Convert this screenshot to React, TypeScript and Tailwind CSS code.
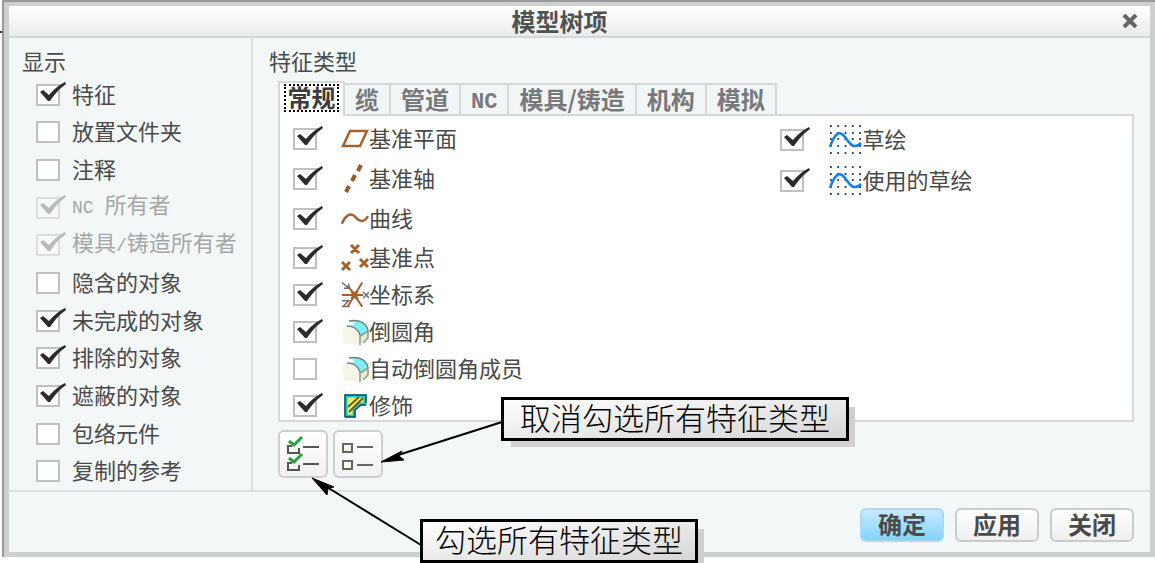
import { useState } from "react";
import type { ReactNode } from "react";

type Item = { label: ReactNode; checked?: boolean; disabled?: boolean; icon?: ReactNode };

const Latin = ({ children }: { children: ReactNode }) => (
  <span className="font-['Liberation_Mono',monospace] text-lg">{children}</span>
);

const PlaneIcon = () => (
  <svg width="28" height="30" viewBox="0 0 28 30" fill="none" stroke="#a5602c" strokeWidth="2.5">
    <path d="M9 7H26L19 22H2Z" />
  </svg>
);

const AxisIcon = () => (
  <svg width="28" height="30" viewBox="0 0 28 30" fill="none" stroke="#9a5a2c" strokeWidth="4">
    <path d="M20 1L17 7M14 11L11 17M8 22L5 28" />
  </svg>
);

const CurveIcon = () => (
  <svg width="28" height="30" viewBox="0 0 29 30" fill="none" stroke="#a5602c" strokeWidth="2.5">
    <path d="M1 20C4 12 10 7 15 13C19 18 24 19 28 12" />
  </svg>
);

const PointIcon = () => (
  <svg width="28" height="30" viewBox="0 0 28 30" fill="none" stroke="#a8602b" strokeWidth="3">
    <path d="M10 2L18 10M18 2L10 10M1 19L9 27M9 19L1 27M19 16L27 24M27 16L19 24" />
  </svg>
);

const CsysIcon = () => (
  <svg width="28" height="30" viewBox="0 0 29 30" fill="none">
    <path d="M1 15H23M7 5L22 27M22 2L7 27" stroke="#a8602b" strokeWidth="2" />
    <path d="M11 11L17 19M17 11L11 19" stroke="#a8602b" strokeWidth="3" />
    <path d="M1 2L8 8M8 3V8H3M1 21H8L2 27H9M23 12L29 18M29 12L23 18" stroke="#6f6f6f" strokeWidth="1.5" />
  </svg>
);

const RoundIcon = () => (
  <svg width="28" height="30" viewBox="0 0 28 30">
    <path d="M1 12L9 9L18 17V27H3Z" fill="#f6f5ea" />
    <path d="M19 17L27 13V21L20 26Z" fill="#e6e8d6" />
    <path d="M9 4C19 2 26 7 27 14L20 19C19 13 16 12 11 9L14 6Z" fill="#7ff0f5" />
    <path d="M8 4C20 2 26 7 27 14M6 9C13 9 17 12 19 18" fill="none" stroke="#6d8486" strokeWidth="1.5" />
    <path d="M19 18V28M19 19L27 14V21L22 26" fill="none" stroke="#8c9a88" strokeWidth="1.5" />
  </svg>
);

const CosmeticIcon = () => (
  <svg width="28" height="30" viewBox="0 0 28 30">
    <path d="M5 5H24V13H19L13 18V25H5Z" fill="#f7ee5c" stroke="#18c9cf" strokeWidth="3" />
    <path d="M7 16L18 6M8 21L22 7" stroke="#6b5d1d" strokeWidth="2" />
    <path d="M4 26V4H26M25 12V5M25 14H20L14 19V26H4" fill="none" stroke="#17494b" strokeWidth="1.5" />
  </svg>
);

const SketchIcon = () => (
  <svg width="35" height="30" viewBox="0 0 35 30" fill="none">
    {[1, 8, 14, 21, 28].map((y) => (
      <path key={y} d={`M2 ${y}H34`} stroke="#2b4a74" strokeWidth="1.8" strokeDasharray="1.8 5.5" />
    ))}
    <path d="M2 22C6 10 11 4 17 12C22 19 26 25 33 18" stroke="#1180ee" strokeWidth="2.5" />
  </svg>
);

const SelectAllIcon = () => (
  <svg width="36" height="36" viewBox="0 0 36 36" fill="none">
    <path d="M7 10H3V17H14V12M7 27H3V34H14V29" stroke="#555" strokeWidth="2" />
    <path d="M18 11H34M18 28H34" stroke="#555" strokeWidth="2" />
    <path d="M4 5L9 9L17 1M4 22L9 26L17 18" stroke="#27a33a" strokeWidth="3" />
  </svg>
);

const SelectNoneIcon = () => (
  <svg width="36" height="36" viewBox="0 0 36 36" fill="none" stroke="#666" strokeWidth="2">
    <path d="M3 8H12V16H3ZM3 25H12V33H3Z" fill="#fffff0" />
    <path d="M17 11H33M17 29H33" />
  </svg>
);

const displayItems: Item[] = [
  { label: "特征", checked: true },
  { label: "放置文件夹" },
  { label: "注释" },
  { label: <><Latin>NC </Latin>所有者</>, checked: true, disabled: true },
  { label: <>模具<Latin>/</Latin>铸造所有者</>, checked: true, disabled: true },
  { label: "隐含的对象" },
  { label: "未完成的对象", checked: true },
  { label: "排除的对象", checked: true },
  { label: "遮蔽的对象", checked: true },
  { label: "包络元件" },
  { label: "复制的参考" },
];

const featureItems: Item[] = [
  { label: "基准平面", checked: true, icon: <PlaneIcon /> },
  { label: "基准轴", checked: true, icon: <AxisIcon /> },
  { label: "曲线", checked: true, icon: <CurveIcon /> },
  { label: "基准点", checked: true, icon: <PointIcon /> },
  { label: "坐标系", checked: true, icon: <CsysIcon /> },
  { label: "倒圆角", checked: true, icon: <RoundIcon /> },
  { label: "自动倒圆角成员", icon: <RoundIcon /> },
  { label: "修饰", checked: true, icon: <CosmeticIcon /> },
];

const sketchItems: Item[] = [
  { label: "草绘", checked: true, icon: <SketchIcon /> },
  { label: "使用的草绘", checked: true, icon: <SketchIcon /> },
];

const tabs = ["缆", "管道", "NC", "模具/铸造", "机构", "模拟"];

function CheckBox({ item }: { item: Item }) {
  return (
    <span className="relative h-[22px] w-6 shrink-0">
      <input
        type="checkbox"
        defaultChecked={item.checked}
        disabled={item.disabled}
        className="peer block h-full w-full appearance-none border-2 border-[#bfc1c1] bg-white disabled:border-[#dcdede] disabled:bg-[#f8fafa]"
      />
      <svg
        viewBox="0 0 30 26"
        className="pointer-events-none absolute -top-0.5 left-0 hidden h-[26px] w-[30px] fill-[#2b2b2b] peer-checked:block peer-disabled:fill-[#b9bbbb]"
      >
        <path d="M4 10L7 8L13 13C17 8 23 3 29 0L30 2C24 6 18 13 14 19L12 19Z" />
      </svg>
    </span>
  );
}

function FeatureRow({ item, className }: { item: Item; className: string }) {
  return (
    <label className={`flex items-center whitespace-nowrap ${className}`}>
      <CheckBox item={item} />
      <span className="ml-6 min-w-7 shrink-0">{item.icon}</span>
      <span className="pb-1">{item.label}</span>
    </label>
  );
}

function Callout({ children, className }: { children: ReactNode; className: string }) {
  return (
    <div
      className={`absolute h-11 border-[3px] border-black bg-linear-to-br from-white to-[#d6d6d6] text-[31px] leading-[34px] font-light whitespace-nowrap text-black shadow-[8px_8px_0_-2px_#cfd0d0] ${className}`}
    >
      {children}
    </div>
  );
}

export default function App() {
  const [active, setActive] = useState(0);
  const tabClass = "h-[31px] border-t-2 border-r-2 border-[#d5d9d9] bg-[#f2f5f5] px-2.5 text-[#77797b]";
  const footerButton =
    "h-[34px] w-[84px] rounded-md border-2 border-[#c9cccc] bg-linear-to-b from-white to-[#efefef] pb-1 text-2xl leading-7 font-bold";

  return (
    <div className="relative bg-white pb-1.5 pl-0.5 font-['Noto_Sans_CJK_SC',sans-serif] text-[22px] leading-7 text-[#4a4a4a]">
      <div className="absolute top-[31px] left-0 h-0.5 w-0.5 bg-[#333]" />
      <div className="border-t-2 border-l-2 border-[#989a9a]">
        <div className="border-x-[5px] border-t-4 border-b-[5px] border-[#cdd0d0] bg-[#f4f7f7]">
          <header className="grid h-8 grid-cols-[1fr_auto_1fr] items-center border-b-2 border-[#d4d7d7] bg-linear-to-b from-white to-[#e9ecec]">
            <h1 className="col-start-2 mr-10 text-2xl leading-7 font-bold text-[#505252]">模型树项</h1>
            <button aria-label="关闭窗口" className="mr-3 justify-self-end">
              <svg width="16" height="14" viewBox="0 0 16 14" fill="none" stroke="#666" strokeWidth="4">
                <path d="M2 1L14 13M14 1L2 13" />
              </svg>
            </button>
          </header>

          <div className="flex border-b-2 border-[#dce0e0]">
            <fieldset className="flex w-[244px] shrink-0 flex-col border-r-2 border-[#dce0e0] pt-2">
              <legend className="contents">
                <span className="pb-0.5 pl-[13px]">显示</span>
              </legend>
              <div className="flex flex-1 flex-col pl-[27px]">
                {displayItems.map((item, i) => (
                  <label
                    key={i}
                    className={`flex flex-1 items-center gap-3 whitespace-nowrap ${item.disabled ? "text-[#a5a7a7]" : ""}`}
                  >
                    <CheckBox item={item} />
                    <span className="pb-1">{item.label}</span>
                  </label>
                ))}
              </div>
            </fieldset>

            <section className="min-w-0 flex-1 pt-2 pr-4 pb-3 pl-4">
              <h2>特征类型</h2>
              <div className="pl-[9px]">
                <div role="tablist" className="mt-[7px] flex items-end text-2xl leading-7 font-bold">
                  <button
                    role="tab"
                    aria-selected={active === 0}
                    onClick={() => setActive(0)}
                    className="relative z-10 -mb-0.5 h-[35px] w-[67px] border-2 border-b-0 border-[#d5d9d9] bg-white px-1 pt-px pb-1 text-[#3c3c3c]"
                  >
                    <span className="block h-7 border-2 border-dotted border-black leading-[22px]">常规</span>
                  </button>
                  {tabs.map((tab, i) => (
                    <button
                      key={tab}
                      role="tab"
                      aria-selected={active === i + 1}
                      onClick={() => setActive(i + 1)}
                      className={
                        tab === "NC"
                          ? `${tabClass} pt-1 font-['Liberation_Mono',monospace] text-[22px]`
                          : `${tabClass} pb-1`
                      }
                    >
                      {tab}
                    </button>
                  ))}
                </div>
                <div className="flex h-[308px] overflow-hidden border-2 border-[#d5d9d9] bg-white pt-[3px] pl-[13px]">
                  <div className="w-[58%] shrink-0">
                    {featureItems.map((item, i) => (
                      <FeatureRow key={i} item={item} className={i < 3 ? "h-10" : "h-[37px]"} />
                    ))}
                  </div>
                  <div>
                    {sketchItems.map((item, i) => (
                      <FeatureRow key={i} item={item} className="h-[41px]" />
                    ))}
                  </div>
                </div>
                <div className="mt-2 flex gap-[5px]">
                  <button
                    aria-label="勾选所有特征类型"
                    className="flex h-12 w-[50px] items-center justify-center rounded-md border-2 border-[#cdd0d0] bg-linear-to-b from-white to-[#f1f1f1]"
                  >
                    <SelectAllIcon />
                  </button>
                  <button
                    aria-label="取消勾选所有特征类型"
                    className="flex h-12 w-[50px] items-center justify-center rounded-md border-2 border-[#cdd0d0] bg-linear-to-b from-white to-[#f1f1f1]"
                  >
                    <SelectNoneIcon />
                  </button>
                </div>
              </div>
            </section>
          </div>

          <footer className="flex justify-end gap-[11px] pt-4 pr-4 pb-2.5">
            <button className="h-[34px] w-[84px] rounded-md border-2 border-[#a9daf2] bg-linear-to-b from-[#c6eaff] to-[#84d2fb] pb-1 text-2xl leading-7 font-bold">
              确定
            </button>
            <button className={footerButton}>应用</button>
            <button className={footerButton}>关闭</button>
          </footer>
        </div>
      </div>

      {/* notes pointing at the two selection buttons */}
      <svg className="pointer-events-none absolute top-[410px] left-[300px]" width="210" height="145" viewBox="300 410 210 145">
        <path d="M502 422L395 456M421 545L322 484" stroke="#000" strokeWidth="2" />
        <path d="M381 462L402 451L399 456L404 460ZM312 478L334 487L328 488L327 495Z" stroke="#000" />
      </svg>
      <Callout className="top-[397px] left-[501px] px-4">取消勾选所有特征类型</Callout>
      <Callout className="top-[519px] left-[420px] px-3">勾选所有特征类型</Callout>
    </div>
  );
}
